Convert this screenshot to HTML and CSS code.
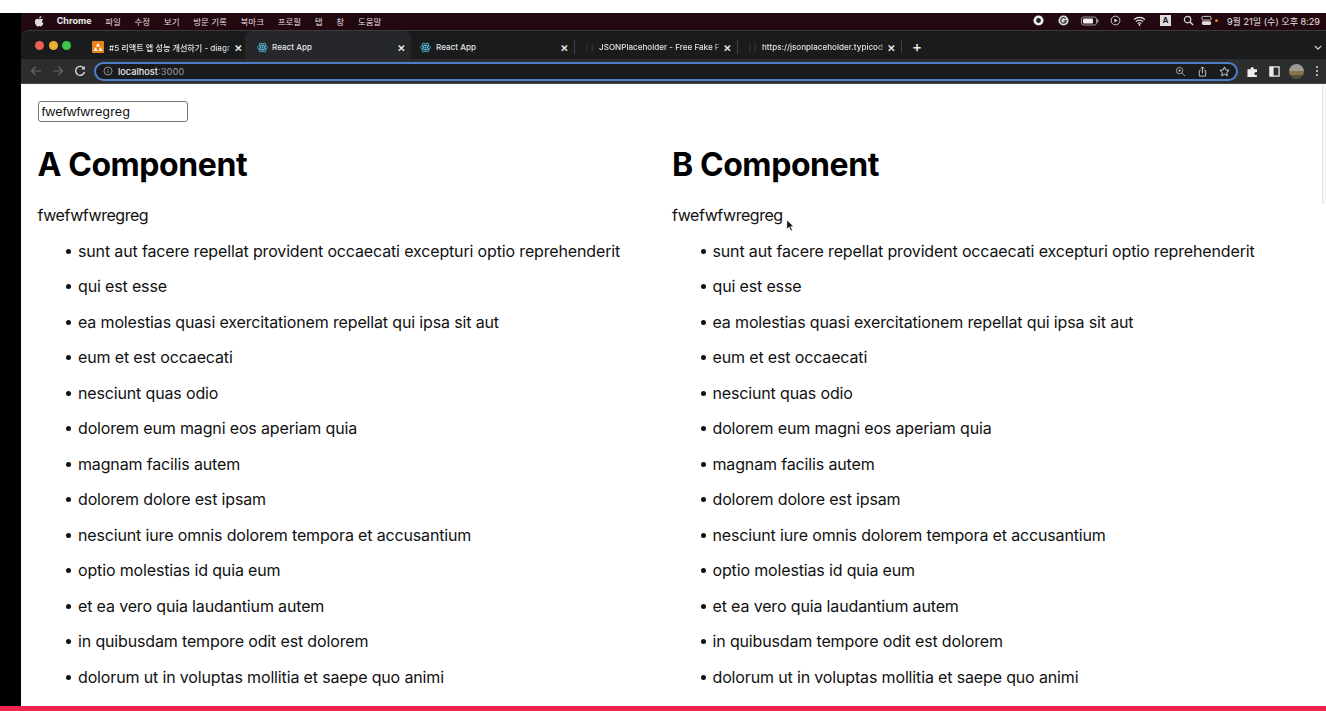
FILE: index.html
```html
<!DOCTYPE html>
<html lang="ko">
<head>
<meta charset="utf-8">
<title>React App</title>
<link rel="stylesheet" href="styles.css">
</head>
<body>
<div class="top-strip"></div>
<div class="stage">
  <div class="side"></div>
  <div class="screen">
    <div class="menubar">
      <div class="menu-left">
        <svg class="apple" viewBox="0 0 14 16"><path d="M10.2 1c.1 1-.3 1.800-.8 2.400-.6.7-1.400 1.100-2.200 1-.1-.9.3-1.800.8-2.400C8.600 1.400 9.500 1 10.200 1zM12.800 5.800c-1 .7-1.500 1.500-1.500 2.600 0 1.300.7 2.200 1.900 2.800-.4 1.100-.9 2-1.500 2.900-.6.800-1.200 1.500-2.100 1.500s-1.200-.5-2.200-.5-1.400.5-2.200.5c-.9 0-1.500-.7-2.200-1.700C2 12.700 1.200 10.800 1.200 9c0-2.700 1.700-4.200 3.500-4.200.9 0 1.700.6 2.300.6s1.500-.7 2.600-.7c1.300 0 2.400.4 3.200 1.100z"/></svg>
        <b class="app-name">Chrome</b>
        <span>파일</span><span>수정</span><span>보기</span><span>방문 기록</span><span>북마크</span><span>프로필</span><span>탭</span><span>창</span><span>도움말</span>
      </div>
      <div class="menu-right">
        <svg class="st st-record" viewBox="0 0 12 12"><circle cx="6" cy="6" r="5.500" fill="#eee"/><circle cx="6" cy="6" r="2.600" fill="#222"/></svg>
        <svg class="st" viewBox="0 0 12 12"><circle cx="6" cy="6" r="5.500" fill="#ddd"/><path d="M8.500 4.200A3 3 0 1 0 9 6.500H6.200" fill="none" stroke="#333" stroke-width="1.300"/></svg>
        <svg class="st-batt" viewBox="0 0 18 10"><rect x=".5" y="1" width="15" height="8" rx="2" fill="none" stroke="#999"/><rect x="2" y="2.500" width="10" height="5" rx="1" fill="#eee"/><rect x="16" y="3.500" width="1.500" height="3" fill="#999"/></svg>
        <svg class="st" viewBox="0 0 12 12"><circle cx="6" cy="6" r="4.800" fill="none" stroke="#ddd"/><path d="M4.800 3.800v4.400L8.300 6z" fill="#ddd"/></svg>
        <svg class="st-wifi" viewBox="0 0 14 11"><path d="M1 4a8.500 8.500 0 0 1 12 0M3 6.200a5.600 5.600 0 0 1 8 0M5 8.300a2.800 2.800 0 0 1 4 0" fill="none" stroke="#eee" stroke-width="1.300"/><circle cx="7" cy="9.800" r="1" fill="#eee"/></svg>
        <span class="st-a">A</span>
        <svg class="st" viewBox="0 0 12 12"><circle cx="5" cy="5" r="3.500" fill="none" stroke="#ddd" stroke-width="1.300"/><path d="M7.600 7.600 11 11" stroke="#ddd" stroke-width="1.500"/></svg>
        <svg class="st st-toggle" viewBox="0 0 12 12"><rect x="1" y="1.500" width="10" height="4" rx="1.500" fill="none" stroke="#ddd"/><rect x="1" y="6.800" width="10" height="4" rx="1.500" fill="#ddd"/></svg>
        <i class="st-dot"></i>
        <span class="clock">9월 21일 (수) 오후 8:29</span>
      </div>
    </div>
    <div class="browser">
      <div class="tabstrip">
        <div class="lights"><i class="l-red"></i><i class="l-yellow"></i><i class="l-green"></i></div>
        <div class="tab tab-first">
          <svg class="fav" viewBox="0 0 12 12"><rect width="12" height="12" rx="1" fill="#e8811a"/><path d="M6 2 8 5.500H4zM3.500 6 5.500 10h-4zM8.500 6l2 4h-4z" fill="#fff"/></svg>
          <span class="tab-title fade">#5 리액트 앱 성능 개선하기 - diagr</span><span class="x">×</span>
        </div>
        <div class="tab tab-active">
          <svg class="fav" viewBox="0 0 12 12"><g fill="none" stroke="#61dafb" stroke-width=".7"><ellipse cx="6" cy="6" rx="5.500" ry="2.200"/><ellipse cx="6" cy="6" rx="5.500" ry="2.200" transform="rotate(60 6 6)"/><ellipse cx="6" cy="6" rx="5.500" ry="2.200" transform="rotate(120 6 6)"/></g><circle cx="6" cy="6" r="1" fill="#61dafb"/></svg>
          <span class="tab-title">React App</span><span class="x">×</span>
        </div>
        <div class="tab tab-react">
          <svg class="fav" viewBox="0 0 12 12"><g fill="none" stroke="#61dafb" stroke-width=".7"><ellipse cx="6" cy="6" rx="5.500" ry="2.200"/><ellipse cx="6" cy="6" rx="5.500" ry="2.200" transform="rotate(60 6 6)"/><ellipse cx="6" cy="6" rx="5.500" ry="2.200" transform="rotate(120 6 6)"/></g><circle cx="6" cy="6" r="1" fill="#61dafb"/></svg>
          <span class="tab-title">React App</span><span class="x">×</span>
        </div>
        <div class="tab tab-json sep">
          <svg class="fav" viewBox="0 0 12 12"><path d="M4 1.500H3v9h1M8 1.500h1v9H8M5 6h.5M7 6h.5" fill="none" stroke="#3a3a3a"/></svg>
          <span class="tab-title fade">JSONPlaceholder - Free Fake F</span><span class="x">×</span>
        </div>
        <div class="tab tab-json tab-last sep">
          <svg class="fav" viewBox="0 0 12 12"><path d="M4 1.500H3v9h1M8 1.500h1v9H8M5 6h.5M7 6h.5" fill="none" stroke="#3a3a3a"/></svg>
          <span class="tab-title fade">https://jsonplaceholder.typicod</span><span class="x">×</span>
        </div>
        <span class="newtab sep">+</span>
        <svg class="chev" viewBox="0 0 10 6"><path d="M1 1l4 4 4-4" fill="none" stroke="#ddd" stroke-width="1.500"/></svg>
      </div>
      <div class="toolbar">
        <svg class="nav" viewBox="0 0 12 12"><path d="M11 6H1.500M5.500 2l-4 4 4 4" fill="none" stroke="#666" stroke-width="1.200"/></svg>
        <svg class="nav" viewBox="0 0 12 12"><path d="M1 6h9.500M6.500 2l4 4-4 4" fill="none" stroke="#666" stroke-width="1.200"/></svg>
        <svg class="nav" viewBox="0 0 12 12"><path d="M10 3.500A4.500 4.500 0 1 0 10.500 7" fill="none" stroke="#ddd" stroke-width="1.400"/><path d="M10.800 1v3.500H7.300z" fill="#ddd"/></svg>
        <div class="omnibox">
          <svg class="info" viewBox="0 0 10 10"><circle cx="5" cy="5" r="4" fill="none" stroke="#aaa" stroke-width=".8"/><path d="M5 4.500v2.500M5 3v.8" stroke="#aaa" stroke-width=".8"/></svg>
          <span class="host">localhost</span><span class="port">:3000</span>
          <span class="grow"></span>
          <svg class="om" viewBox="0 0 12 12"><circle cx="5" cy="5" r="3.500" fill="none" stroke="#aaa"/><path d="M7.500 7.500 11 11M3.500 5h3M5 3.500v3" stroke="#aaa"/></svg>
          <svg class="om" viewBox="0 0 12 12"><path d="M4 5H2.500v6h7V5H8M6 8V1M4 3l2-2 2 2" fill="none" stroke="#ccc"/></svg>
          <svg class="om" viewBox="0 0 12 12"><path d="M6 1l1.500 3.300 3.500.4-2.600 2.400.7 3.500L6 8.900l-3.100 1.700.7-3.500L1 4.700l3.500-.4z" fill="none" stroke="#ddd"/></svg>
        </div>
        <svg class="tool" viewBox="0 0 12 12"><path d="M.5 3.500h3.500V2.800a1.700 1.700 0 0 1 3.400 0v.7h3.500v3H9.800a1.800 1.800 0 0 0 0 3.600h1.100v2H.5z" fill="#eee"/></svg>
        <svg class="tool" viewBox="0 0 12 12"><rect x="1" y="1" width="10" height="10" fill="none" stroke="#eee" stroke-width="1.400"/><rect x="1" y="1" width="4" height="10" fill="#eee"/></svg>
        <div class="avatar"></div>
        <svg class="kebab" viewBox="0 0 4 12"><circle cx="2" cy="2" r="1" fill="#ddd"/><circle cx="2" cy="6" r="1" fill="#ddd"/><circle cx="2" cy="10" r="1" fill="#ddd"/></svg>
      </div>
    </div>
    <div class="page">
      <input class="search" type="text" value="fwefwfwregreg">
      <div class="columns">
        <section class="col">
          <h1>A Component</h1>
          <div class="query">fwefwfwregreg</div>
          <ul>
            <li>sunt aut facere repellat provident occaecati excepturi optio reprehenderit</li>
            <li>qui est esse</li>
            <li>ea molestias quasi exercitationem repellat qui ipsa sit aut</li>
            <li>eum et est occaecati</li>
            <li>nesciunt quas odio</li>
            <li>dolorem eum magni eos aperiam quia</li>
            <li>magnam facilis autem</li>
            <li>dolorem dolore est ipsam</li>
            <li>nesciunt iure omnis dolorem tempora et accusantium</li>
            <li>optio molestias id quia eum</li>
            <li>et ea vero quia laudantium autem</li>
            <li>in quibusdam tempore odit est dolorem</li>
            <li>dolorum ut in voluptas mollitia et saepe quo animi</li>
          </ul>
        </section>
        <section class="col">
          <h1>B Component</h1>
          <div class="query">fwefwfwregreg</div>
          <ul>
            <li>sunt aut facere repellat provident occaecati excepturi optio reprehenderit</li>
            <li>qui est esse</li>
            <li>ea molestias quasi exercitationem repellat qui ipsa sit aut</li>
            <li>eum et est occaecati</li>
            <li>nesciunt quas odio</li>
            <li>dolorem eum magni eos aperiam quia</li>
            <li>magnam facilis autem</li>
            <li>dolorem dolore est ipsam</li>
            <li>nesciunt iure omnis dolorem tempora et accusantium</li>
            <li>optio molestias id quia eum</li>
            <li>et ea vero quia laudantium autem</li>
            <li>in quibusdam tempore odit est dolorem</li>
            <li>dolorum ut in voluptas mollitia et saepe quo animi</li>
          </ul>
        </section>
      </div>
      <div class="scrolltrack"></div>
      <svg class="cursor" viewBox="0 0 10 14"><path d="M1 1v10l2.500-2.300L5.500 13l1.500-.7-2-4.200h3.300z" fill="#111" stroke="#fff" stroke-width=".5"/></svg>
    </div>
  </div>
</div>
<div class="pink"></div>
</body>
</html>
```

FILE: styles.css
```css
* { box-sizing: border-box; }
html, body { margin: 0; padding: 0; }
body {
  width: 1326px;
  height: 711px;
  overflow: hidden;
  display: flex;
  flex-direction: column;
  background: #fff;
  font-family: Inter, "Noto Sans CJK KR", sans-serif;
}
.top-strip { height: 13px; flex: none; background: #fff; }
.stage { flex: 1; display: flex; min-height: 0; }
.side { width: 21px; flex: none; background: #000; }
.screen { flex: 1; display: flex; flex-direction: column; min-width: 0; position: relative; background: #1c0a10; }
.pink { height: 5px; flex: none; background: #ef2450; }

.menubar {
  height: 17px;
  flex: none;
  display: flex;
  justify-content: space-between;
  align-items: center;
  padding: 0 6px 2px 13px;
  background: #22080f;
  color: #e4dde0;
  font-size: 8.500px;
}
.menu-left { display: flex; align-items: center; gap: 13.700px; }
.apple { width: 10px; height: 12px; fill: #ddd; margin-right: -1px; }
.app-name { font-size: 9px; color: #eee; }
.menu-right { display: flex; align-items: center; gap: 12px; }
.st { width: 11px; height: 11px; }
.st-record { margin-right: 2px; }
.st-toggle { margin-left: -5px; }
.st-batt { width: 18px; height: 10px; margin-right: -1px; }
.st-wifi { width: 13px; height: 10px; margin-right: 2px; }
.st-a { width: 11px; height: 11px; background: #ddd; color: #222; font-size: 8px; font-weight: 700; text-align: center; line-height: 11px; }
.st-dot { width: 3px; height: 3px; border-radius: 50%; background: #d8801f; margin-left: -9px; }
.clock { font-size: 9.100px; color: #e8e4e6; margin-left: -3px; }

.browser { flex: none; background: #1a1b1d; border-radius: 8px 0 0 0; border-top: 1px solid #3a3a3d; }
.tabstrip { height: 28px; display: flex; align-items: center; padding-left: 14px; position: relative; }
.lights { display: flex; gap: 4.500px; width: 57px; flex: none; }
.lights i { width: 9px; height: 9px; border-radius: 50%; }
.l-red { background: #ec5f57; }
.l-yellow { background: #eeb02f; }
.l-green { background: #39c649; }
.tab {
  height: 28px;
  display: flex;
  align-items: center;
  color: #e2e2e2;
  font-size: 8.100px;
  font-weight: 500;
  padding: 4px 6px 0 10px;
  flex: none;
  position: relative;
}
.tab-first { width: 153px; padding-left: 0; padding-right: 3px; }
.tab-active { width: 166px; padding-left: 12px; background: #26272a; border-radius: 7px 7px 0 0; }
.tab-react { width: 163px; padding-left: 9px; }
.tab-json { width: 163px; }
.tab-last { width: 164px; }
.fav { width: 11px; height: 11px; flex: none; margin-right: 4px; }
.tab-first .fav { width: 12px; height: 12px; margin-right: 5px; }
.tab-react .fav { margin-right: 5px; }
.tab-title { flex: 1; white-space: nowrap; overflow: hidden; min-width: 0; }
.fade { -webkit-mask-image: linear-gradient(to right, #000 92%, transparent); mask-image: linear-gradient(to right, #000 92%, transparent); }
.x { flex: none; width: 8px; text-align: center; font-size: 13px; color: #eee; line-height: 1; }
.sep::before { content: ""; position: absolute; left: 0; top: 9px; height: 14px; width: 1px; background: #3f4043; }
.newtab { position: relative; color: #eee; font-size: 15px; line-height: 28px; padding: 3px 0 0 11px; font-weight: 500; }
.chev { position: absolute; right: 4px; top: 14px; width: 8px; height: 5px; }

.toolbar {
  height: 25px;
  display: flex;
  align-items: center;
  background: #2c2d2f;
  padding: 0 7px 0 9px;
  border-bottom: 1px solid #4a4a4c;
}
.nav { width: 12px; height: 12px; margin-right: 10px; flex: none; }
.omnibox {
  flex: 1;
  height: 19px;
  margin-left: -2px;
  margin-right: 9px;
  border: 2px solid #4f7fc9;
  border-radius: 10px;
  background: #1a1b1d;
  display: flex;
  align-items: center;
  padding: 0 6px 0 7px;
  font-size: 9.200px;
  font-weight: 500;
}
.info { width: 10px; height: 10px; margin-right: 5px; }
.host { color: #e8e8e8; }
.port { color: #85878a; }
.grow { flex: 1; }
.om { width: 11px; height: 11px; margin-left: 11px; }
.tool { width: 11px; height: 11px; margin-right: 11px; flex: none; }
.avatar { width: 15px; height: 15px; margin-left: -2px; border-radius: 50%; background: linear-gradient(#9c9c94 0 45%, #8a7448 45% 75%, #57503f 75%); flex: none; margin-right: 11px; }
.kebab { width: 4px; height: 12px; flex: none; }

.page { flex: 1; min-height: 0; overflow: hidden; background: #fff; padding: 17px 0 0 16.500px; position: relative; color: #111; }
.search {
  display: block;
  width: 150px;
  height: 21px;
  padding: 0 3px;
  border: 1px solid #767676;
  border-radius: 3px;
  font: 13.330px "Liberation Sans", sans-serif;
  letter-spacing: 0.2px;
  color: #111;
  background: #fff;
}
.columns { display: grid; grid-template-columns: 634.500px 1fr; }
.col { min-width: 0; }
h1 { margin: 25px 0 0; font-size: 32px; line-height: 36px; font-weight: 700; color: #000; letter-spacing: -0.42px; }
.query { margin-top: 22px; font-size: 16px; line-height: 20px; letter-spacing: -0.45px; }
ul { margin: 0; padding: 0 0 0 40.500px; font-size: 16px; list-style: none; letter-spacing: -0.15px; }
li { line-height: 20px; margin-top: 15.500px; white-space: nowrap; position: relative; }
li::before { content: ""; position: absolute; left: -12px; top: 8px; width: 5px; height: 5px; border-radius: 50%; background: #111; }
.scrolltrack { position: absolute; right: 0; top: 0; width: 4px; height: 120px; border-left: 1px solid #e6e6e6; background: #f8f8f8; }
.cursor { position: absolute; left: 765px; top: 135px; width: 9px; height: 13px; }
```
